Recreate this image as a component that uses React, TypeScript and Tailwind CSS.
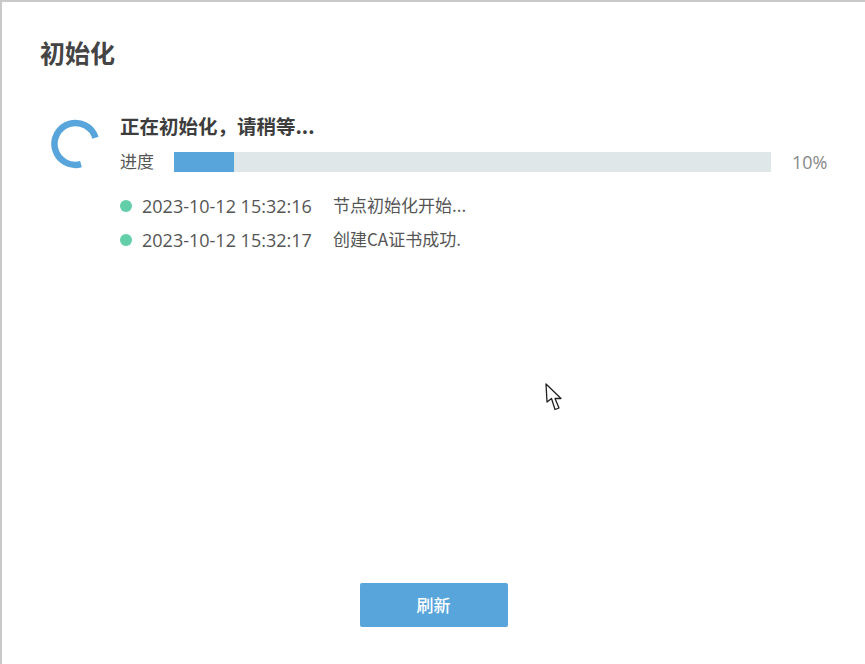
const sans = "font-['Noto_Sans_CJK_SC','Liberation_Sans',sans-serif]";

function Spinner() {
  return (
    <svg width="50" height="50" viewBox="0 0 50 50" className="shrink-0">
      <path d="M45.5 18.7 A21 21 0 1 0 31 45.2" fill="none" stroke="#58a5dc" strokeWidth="6.5" />
    </svg>
  );
}

function Cursor() {
  return (
    <svg width="18" height="28" viewBox="0 0 18 28" className="absolute left-[543px] top-[381px]">
      <path d="M1 1 L2 19 L6.5 15.5 L10 26.5 L14 25 L10 15.5 L16 15.5 Z" fill="#fff" stroke="#222" strokeWidth="1.3" strokeLinejoin="round" />
    </svg>
  );
}

function LogRow({ time, msg }: { time: string; msg: string }) {
  return (
    <div className="flex items-center h-[34px]">
      <span className="w-3 h-3 rounded-full bg-[#62cfa8] shrink-0" />
      <span className="ml-[10px] w-[191px] text-[18px] text-[#555] font-['Open_Sans','Liberation_Sans',sans-serif]">{time}</span>
      <span className="text-[17px] leading-[20px] pb-[2px] text-[#555]">{msg}</span>
    </div>
  );
}

export default function App() {
  return (
    <div className={`${sans} relative w-[865px] h-[664px] bg-white border-t-2 border-l-2 border-[#c9c9c9] flex flex-col overflow-hidden`}>
      <h1 className="ml-[38px] mt-[34px] text-[25px] leading-[32px] font-bold text-[#444]">初始化</h1>
      <div className="flex mt-[45px] ml-[48px]">
        <div className="pt-[6px]">
          <Spinner />
        </div>
        <div className="ml-[20px] w-[708px]">
          <div className="text-[19.5px] leading-[26px] font-bold text-[#3d3d3d]">正在初始化，请稍等...</div>
          <div className="flex items-center mt-[13px] h-[20px]">
            <span className="w-[54px] text-[17px] leading-[18px] pb-[2px] text-[#555]">进度</span>
            <div className="w-[597px] h-[20px] bg-[#e0e7e9]">
              <div className="w-[10%] h-full bg-[#58a5dc]" />
            </div>
            <span className="ml-[21px] text-[18px] text-[#888] font-['Open_Sans','Liberation_Sans',sans-serif]">10%</span>
          </div>
          <div className="mt-[17px]">
            <LogRow time="2023-10-12 15:32:16" msg="节点初始化开始..." />
            <LogRow time="2023-10-12 15:32:17" msg="创建CA证书成功." />
          </div>
        </div>
      </div>
      <div className="flex-1" />
      <div className="flex justify-center mb-[37px]">
        <button className="w-[148px] h-[44px] rounded-[2px] bg-[#58a5dc] text-white text-[17px] font-medium">刷新</button>
      </div>
      <Cursor />
    </div>
  );
}
